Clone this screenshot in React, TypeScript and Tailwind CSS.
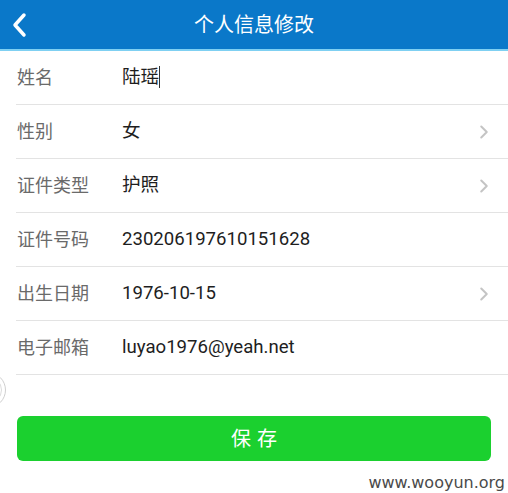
import { ChevronRight } from "lucide-react"

const font = { fontFamily: 'Roboto, "Noto Sans CJK SC", sans-serif' }

type Row = { label: string; value: string; arrow?: boolean; caret?: boolean }

const rows: Row[] = [
  { label: "姓名", value: "陆瑶", caret: true },
  { label: "性别", value: "女", arrow: true },
  { label: "证件类型", value: "护照", arrow: true },
  { label: "证件号码", value: "230206197610151628" },
  { label: "出生日期", value: "1976-10-15", arrow: true },
  { label: "电子邮箱", value: "luyao1976@yeah.net" },
]

export default function App() {
  return (
    <div className="w-[508px] h-[493px] bg-white overflow-hidden relative" style={font}>
      <div className="h-[51px] bg-[#0a78c9] flex items-center relative border-b-2 border-[#7fd0f2]">
        <svg className="absolute left-[10px] top-[12px]" width="18" height="26" viewBox="0 0 18 26">
          <path d="M14 3 L5 13 L14 23" fill="none" stroke="white" strokeWidth="3.5" strokeLinecap="round" strokeLinejoin="round" />
        </svg>
        <div className="w-full text-center text-white text-[20px] leading-none">个人信息修改</div>
      </div>

      <div className="pl-4">
        {rows.map((r) => (
          <div key={r.label} className="h-[54px] flex items-center border-b border-[#e3e3e3] pr-4">
            <div className="w-[106px] pl-px text-[18px] text-[#6a6a6a]">{r.label}</div>
            <div className="flex-1 flex items-center text-[18.6px] text-[#1e1e1e]">
              {r.value}
              {r.caret && <span className="inline-block w-px h-[22px] bg-[#333]" />}
            </div>
            {r.arrow && <ChevronRight size={22} strokeWidth={2.2} className="text-[#c4c4c4] mr-[-3px]" />}
          </div>
        ))}
      </div>

      <div className="absolute left-[-30px] top-[372px] w-[36px] h-[36px] rounded-full border border-[#cfcfcf]" />
      <div className="absolute left-[-26px] top-[376px] w-[28px] h-[28px] rounded-full border border-[#dcdcdc]" />

      <div className="px-[17px] mt-[41px]">
        <div className="h-[45px] rounded-[6px] bg-[#1bd02f] flex items-center justify-center text-white text-[20px] tracking-[6px] pl-[6px]">
          保存
        </div>
      </div>

      <div className="absolute right-[3px] bottom-[2px] text-[16px] text-[#4a4a4a] leading-none" style={{ fontFamily: '"DejaVu Sans", sans-serif' }}>
        www.wooyun.org
      </div>
    </div>
  )
}
